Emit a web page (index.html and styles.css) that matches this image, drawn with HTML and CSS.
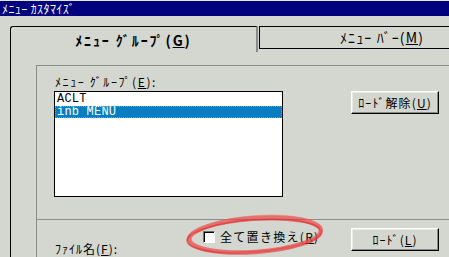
FILE: index.html
```html
<!DOCTYPE html>
<html lang="ja">
<head>
  <meta charset="UTF-8">
  <title>ﾒﾆｭｰ ｶｽﾀﾏｲｽﾞ</title>
  <link rel="stylesheet" href="styles.css">
</head>
<body>
  <div class="titlebar">ﾒﾆｭｰ ｶｽﾀﾏｲｽﾞ</div>

  <div class="dialog">
    <div class="tabs">
      <div class="tab active">ﾒﾆｭｰ ｸﾞﾙｰﾌﾟ(<u>G</u>)</div>
      <div class="tab">ﾒﾆｭｰ ﾊﾞｰ(<u>M</u>)</div>
    </div>

    <div class="page">
      <div class="group">
        <div class="upper">
          <div class="list-col">
            <div class="label">ﾒﾆｭｰ ｸﾞﾙｰﾌﾟ(<u>E</u>):</div>
            <div class="listbox">
              <div class="item">ACLT</div>
              <div class="item selected">inb MENU</div>
            </div>
          </div>
          <button class="btn unload">ﾛｰﾄﾞ解除(<u>U</u>)</button>
        </div>

        <div class="lower">
          <div class="label file-label">ﾌｧｲﾙ名(<u>F</u>):</div>
          <label class="check">
            <span class="box"></span>
            <span class="label">全て置き換え(<u>R</u>)</span>
          </label>
          <button class="btn load">ﾛｰﾄﾞ(<u>L</u>)</button>
        </div>
      </div>
    </div>
  </div>

  <!-- red marker drawn over the checkbox -->
  <svg class="marker" width="160" height="46" viewBox="0 0 160 46">
    <g transform="rotate(-4 80 24)" fill="none">
      <ellipse cx="80" cy="24" rx="66" ry="17" stroke="rgba(232,60,60,0.65)" stroke-width="4.5"/>
      <ellipse cx="79" cy="25" rx="67" ry="16" stroke="rgba(226,40,40,0.55)" stroke-width="2"/>
      <ellipse cx="81" cy="23" rx="65" ry="18" stroke="rgba(240,110,110,0.45)" stroke-width="1.5"/>
    </g>
  </svg>
</body>
</html>
```

FILE: styles.css
```css
body {
  margin: 0;
  width: 449px;
  height: 257px;
  overflow: hidden;
  position: relative;
  background-color: #d3d7cf;
  font-family: "Noto Sans CJK JP", "DejaVu Sans", sans-serif;
  font-size: 12px;
  color: #000;
}
u {
  text-decoration: underline;
  text-underline-offset: 1px;
}
.titlebar {
  height: 15px;
  border-top: 1px solid #e4e4e4;
  background-color: #00007e;
  color: #fff;
  line-height: 15px;
  padding-left: 2px;
  letter-spacing: 0.4px;
}
.dialog {
  padding: 10px 0 0 10px;
}
.tabs {
  display: flex;
  height: 26px;
}
.tab {
  flex: 0 0 auto;
  width: 245px;
  height: 23px;
  box-sizing: border-box;
  border-top: 1px solid #000;
  border-left: 1px solid #000;
  border-bottom: 1px solid #000;
  margin-left: 1px;
  font-size: 14px;
  line-height: 21px;
  text-align: center;
  letter-spacing: 1.1px;
}
.tab.active {
  width: 248px;
  height: 26px;
  margin-left: 0;
  border-bottom: none;
  border-right: 2px solid #8a8a8a;
  border-top-left-radius: 3px;
  font-weight: bold;
  line-height: 26px;
  letter-spacing: 1.9px;
}
.page {
  border-left: 1px solid #000;
  height: 205px;
  padding: 13px 0 0 25px;
}
.group {
  border-top: 1px solid #8c8c8c;
  border-left: 1px solid #8c8c8c;
  height: 100%;
}
.label {
  letter-spacing: 1px;
  line-height: 14px;
}
.upper {
  display: flex;
  align-items: flex-start;
  height: 154px;
  border-bottom: 1px solid #8c8c8c;
  padding-left: 17px;
  box-sizing: border-box;
}
.list-col {
  padding-top: 9px;
}
.list-col .label {
  padding-left: 1px;
  margin-bottom: 2px;
  letter-spacing: 1.6px;
}
.listbox {
  width: 229px;
  height: 106px;
  box-sizing: border-box;
  border: 1px solid #000;
  background-color: #fff;
  font-family: "Liberation Mono", monospace;
  font-size: 12px;
  padding-top: 1px;
}
.item {
  height: 12px;
  line-height: 12px;
  padding-left: 2px;
  letter-spacing: 0.2px;
}
.item.selected {
  margin-top: 1px;
  background-color: #0a7cc0;
  color: #fff;
  outline: 1px dotted #e08040;
  outline-offset: -1px;
}
.btn {
  font-family: inherit;
  font-size: 12px;
  color: #000;
  letter-spacing: 1.1px;
  background-color: #d3d7cf;
  width: 88px;
  height: 23px;
  padding: 0;
  border: 1px solid;
  border-color: #fff #000 #000 #fff;
  box-shadow: inset -1px -1px #8a8a8a, inset 1px 1px #e8ebe5;
}
.unload {
  margin: 25px 0 0 68px;
}
.lower {
  display: flex;
  align-items: flex-start;
  padding: 8px 0 0 18px;
}
.file-label {
  width: 148px;
  margin-top: 14px;
}
.check {
  width: 148px;
  display: flex;
  align-items: center;
  margin-top: 2px;
  height: 13px;
}
.check .label {
  letter-spacing: 1.3px;
}
.box {
  width: 10px;
  height: 10px;
  background-color: #fff;
  border: 1px solid;
  border-color: #6c6c6c #fff #fff #6c6c6c;
  box-shadow: inset 1px 1px #000;
  margin-right: 5px;
}
.marker {
  position: absolute;
  left: 175px;
  top: 211px;
  filter: blur(0.7px);
}
```
